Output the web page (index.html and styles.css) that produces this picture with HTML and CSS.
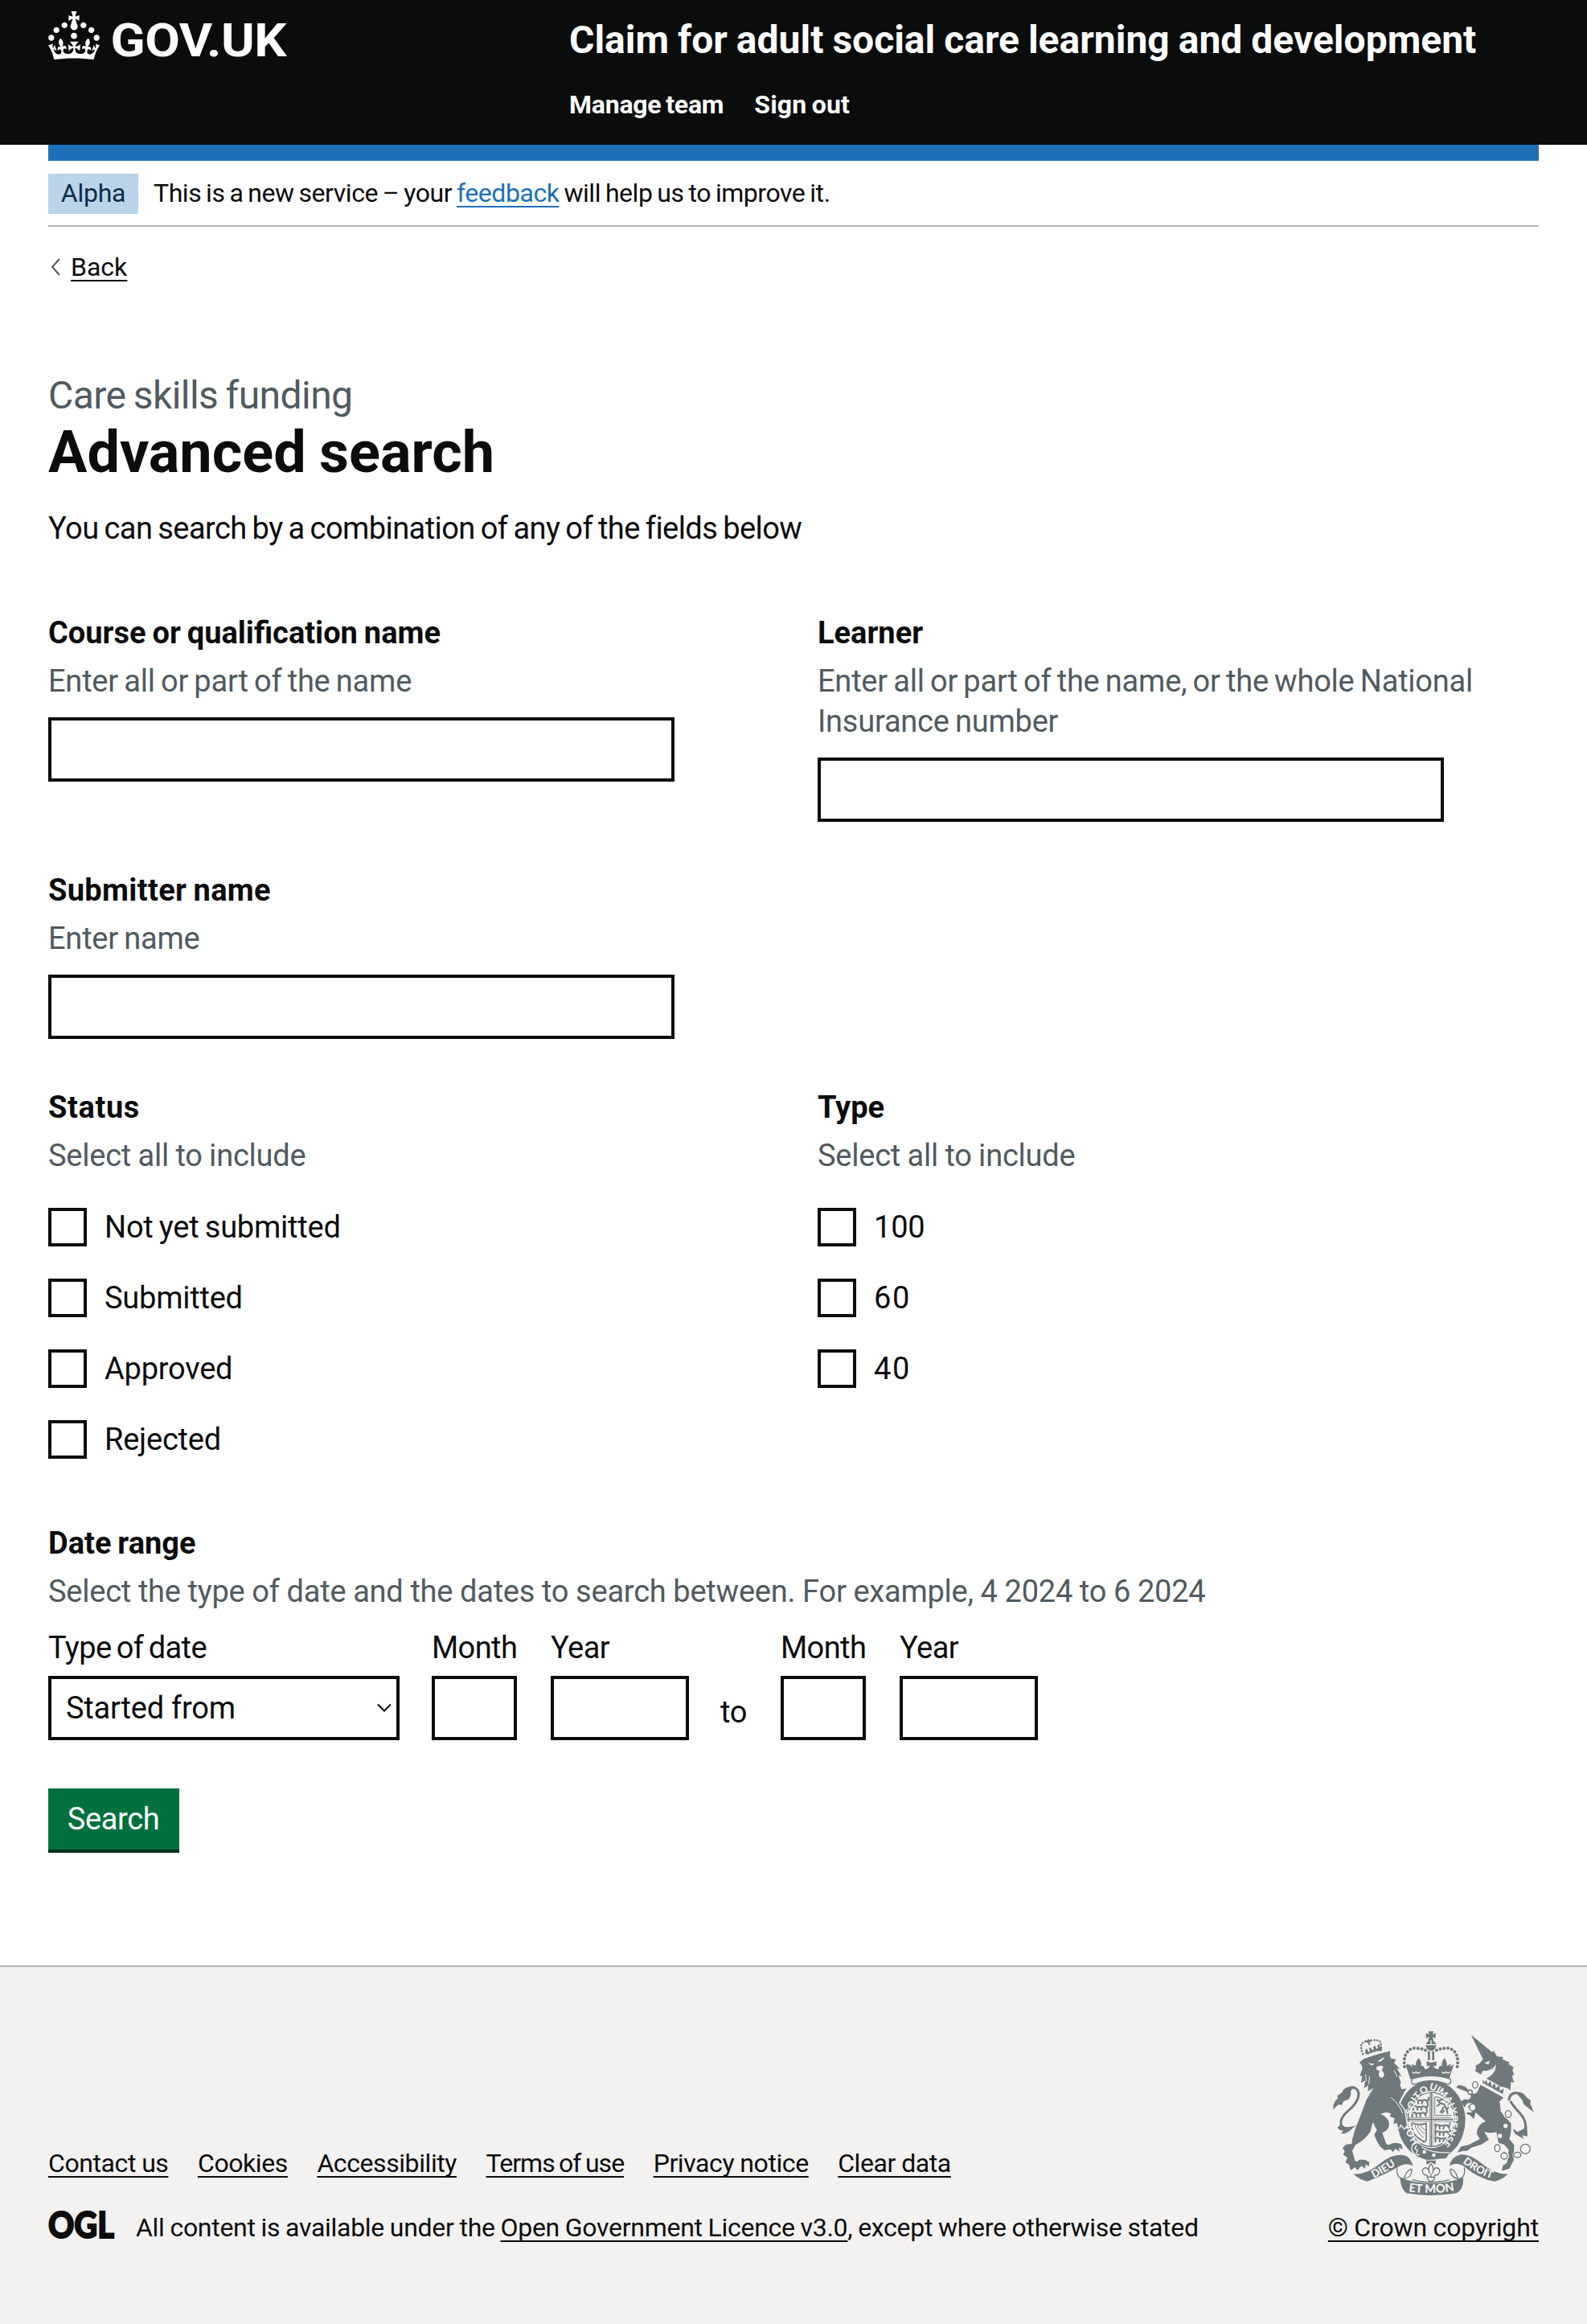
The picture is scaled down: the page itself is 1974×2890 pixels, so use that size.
FILE: index.html
```html
<!DOCTYPE html>
<html lang="en">
<head>
<meta charset="utf-8">
<title>Advanced search</title>
<link rel="stylesheet" href="styles.css">
</head>
<body>
<header class="header">
  <div class="container header-row">
    <a class="logo" href="#" aria-label="GOV.UK">
      <svg width="300" height="60" viewBox="0 0 150 30">
        <path fill="#fff" d="M22.6 10.4c-1 .4-2-.1-2.4-1-.4-.9.1-2 1-2.4.9-.4 2 .1 2.4 1s-.1 2-1 2.4m4.9 3c-1 .4-2-.1-2.4-1-.4-.9.1-2 1-2.4.9-.4 2 .1 2.4 1s0 2-1 2.4m3.3 4.8c-1 .4-2-.1-2.4-1-.4-.9.1-2 1-2.4.9-.4 2 .1 2.4 1s-.1 2-1 2.4M17 4.7l2.3 1.2V2.5l-2.3.7-.2-.2.9-3h-3.4l.9 3-.2.2c-.1.1-2.3-.7-2.3-.7v3.4L15 4.7c.1.1.1.2.2.2l-1.3 4c-.1.2-.1.4-.1.6 0 1.1.8 2 1.9 2.2h.7c1-.2 1.9-1.1 1.9-2.1 0-.2 0-.4-.1-.6l-1.3-4c-.1-.2 0-.2.1-.3m-7.6 5.7c.9.4 2-.1 2.4-1 .4-.9-.1-2-1-2.4-.9-.4-2 .1-2.4 1s0 2 1 2.4m-5 3c.9.4 2-.1 2.4-1 .4-.9-.1-2-1-2.4-.9-.4-2 .1-2.4 1s.1 2 1 2.4m-3.2 4.8c.9.4 2-.1 2.4-1 .4-.9-.1-2-1-2.4-.9-.4-2 .1-2.4 1s0 2 1 2.4m14.8 11c4.4 0 8.6.3 12.3.8 1.1-4.5 2.4-7 3.7-8.8l-2.5-.9c.2 1.3.3 1.9 0 2.7-.4-.4-.8-1.1-1.1-2.3l-1.2 4c.7-.5 1.3-.8 2-.9-1.1 2.5-2.6 3.1-3.5 3-1.1-.2-1.7-1.2-1.5-2.1.3-1.2 1.5-1.5 2.1-.1 1.1-2.3-.8-3-2-2.3 1.9-1.9 2.1-3.5.6-5.6-2.1 1.6-2.1 3.2-1.2 5.5-1.2-1.4-3.2-.6-2.5 1.6.9-1.4 2.1-.5 1.9.8-.2 1.1-1.7 2.1-3.5 1.9-2.7-.2-2.9-2.1-2.9-3.6.7-.1 1.9.5 2.9 1.9l.4-4.3c-1.1 1.1-2.1 1.4-3.2 1.4.4-1.2 2.1-3 2.1-3h-5.4s1.7 1.9 2.1 3c-1.1 0-2.1-.2-3.2-1.4l.4 4.3c1-1.4 2.2-2 2.9-1.9-.1 1.5-.2 3.4-2.9 3.6-1.9.2-3.4-.8-3.5-1.9-.2-1.3 1-2.2 1.9-.8.7-2.3-1.2-3-2.5-1.6.9-2.2.9-3.9-1.2-5.5-1.5 2-1.3 3.7.6 5.6-1.2-.7-3.1 0-2 2.3.6-1.4 1.8-1.1 2.1.1.2.9-.3 1.9-1.5 2.1-.9.2-2.4-.5-3.5-3 .6 0 1.2.3 2 .9l-1.2-4c-.3 1.1-.7 1.9-1.1 2.3-.3-.8-.2-1.4 0-2.7l-2.9.9C1.3 23 2.6 25.5 3.7 30c3.7-.5 7.9-.8 12.3-.8"/>
        <circle cx="16" cy="15.3" r="1.9" fill="#fff"/>
        <text class="logo-text" x="38.8" y="28" textLength="109.2" lengthAdjust="spacingAndGlyphs">GOV.UK</text>
      </svg>
    </a>
    <div class="header-content">
      <a class="service-name" href="#">Claim for adult social care learning and development</a>
      <nav class="header-nav">
        <a href="#">Manage team</a>
        <a class="sign-out" href="#">Sign out</a>
      </nav>
    </div>
  </div>
</header>

<div class="container">
  <div class="phase-banner">
    <strong class="tag">Alpha</strong>
    <p class="phase-text">This is a new service – your <a class="link" href="#">feedback</a> will help us to improve it.</p>
  </div>
  <a class="back-link" href="#">
    <svg width="14" height="24" viewBox="0 0 14 24"><path d="M12 2 3 12l9 10" fill="none" stroke="#505a5f" stroke-width="2"/></svg>
    <span class="underlined">Back</span>
  </a>

  <main>
    <span class="caption">Care skills funding</span>
    <h1 class="title">Advanced search</h1>
    <p class="intro">You can search by a combination of any of the fields below</p>

    <form class="form">
      <div class="row">
        <div class="field">
          <label class="label" for="course">Course or qualification name</label>
          <div class="hint">Enter all or part of the name</div>
          <input class="input" id="course" type="text">
        </div>
        <div class="field">
          <label class="label" for="learner">Learner</label>
          <div class="hint">Enter all or part of the name, or the whole National<br>Insurance number</div>
          <input class="input" id="learner" type="text">
        </div>
      </div>
      <div class="row">
        <div class="field">
          <label class="label label-wide" for="submitter">Submitter name</label>
          <div class="hint">Enter name</div>
          <input class="input" id="submitter" type="text">
        </div>
      </div>
      <div class="row row-checks">
        <fieldset class="field">
          <legend class="label label-wider">Status</legend>
          <div class="hint hint-select">Select all to include</div>
          <div class="checks">
            <label class="check"><input type="checkbox">Not yet submitted</label>
            <label class="check"><input type="checkbox">Submitted</label>
            <label class="check"><input type="checkbox">Approved</label>
            <label class="check"><input type="checkbox">Rejected</label>
          </div>
        </fieldset>
        <fieldset class="field">
          <legend class="label">Type</legend>
          <div class="hint hint-select">Select all to include</div>
          <div class="checks">
            <label class="check"><input type="checkbox">100</label>
            <label class="check check-wide"><input type="checkbox">60</label>
            <label class="check check-wide"><input type="checkbox">40</label>
          </div>
        </fieldset>
      </div>

      <fieldset class="dates">
        <legend class="label">Date range</legend>
        <div class="hint hint-dates">Select the type of date and the dates to search between. For example, 4 2024 to 6 2024</div>
        <div class="date-row">
          <label class="date-item type">Type of date
            <span class="select-wrap">
              <select class="select"><option>Started from</option></select>
              <svg class="select-arrow" width="20" height="14" viewBox="0 0 20 14"><path d="M2 2.500l8 8 8-8" fill="none" stroke="#0b0c0c" stroke-width="2"/></svg>
            </span>
          </label>
          <label class="date-item month">Month<input class="input" type="text"></label>
          <label class="date-item year">Year<input class="input" type="text"></label>
          <span class="to">to</span>
          <label class="date-item month">Month<input class="input" type="text"></label>
          <label class="date-item year">Year<input class="input" type="text"></label>
        </div>
      </fieldset>

      <button class="button" type="button">Search</button>
    </form>
  </main>
</div>

<footer class="footer">
  <div class="container footer-row">
    <div class="footer-meta">
      <nav class="footer-links">
        <a href="#">Contact us</a>
        <a href="#">Cookies</a>
        <a href="#">Accessibility</a>
        <a class="terms" href="#">Terms of use</a>
        <a href="#">Privacy notice</a>
        <a href="#">Clear data</a>
      </nav>
      <div class="licence">
        <svg class="ogl" width="82" height="36" viewBox="0 0 82 36"><text class="ogl-text" x="0" y="33.500" textLength="82" lengthAdjust="spacingAndGlyphs">OGL</text></svg>
        <span>All content is available under the <a href="#">Open Government Licence v3.0</a>, except where otherwise stated</span>
      </div>
    </div>
    <div class="copyright">
      <svg class="arms" width="250" height="204" viewBox="174 138 750 612">
        <defs>
          <path id="garter" d="M541 581A99 116 0 0 1 541 357A99 116 0 0 1 541 581"/>
          <path id="dieu" d="M318 690Q372 664 416 632"/>
          <path id="mon" d="M454 735Q540 748 630 733"/>
          <path id="droit" d="M652 624Q706 668 772 690"/>
          <g id="passant">
            <path d="M0 10q8-12 16-5q12 3 24-1q10 0 16 6M6 10l-4 10M18 8l2 12M36 8l-4 12M50 8l6 10M4 4l-3-6M54 8q8-8 2-14" fill="none" stroke-width="6"/>
          </g>
        </defs>
        <g class="grey">
          <!-- royal crown -->
          <path d="M530 138h20l-5 12 12-6v20l-12-5 5 14h-22l5-14-12 5v-20l12 6z"/>
          <circle cx="540" cy="191" r="19"/>
          <path d="M528 212h8v34h-8zM544 212h8v34h-8z"/>
          <path class="line beads" d="M441 270C434 222 458 198 486 201Q506 202 524 211"/>
          <path class="line beads" d="M638 270C646 222 622 198 594 201Q574 202 556 211"/>
          <path d="M458 262l16 10-8-12 18 6q-4-12 10-28q14 16 8 30q14-4 12 8q8 6 14 0 6-4 8-10l-12 2v-18l14 4h8l14-4v18l-12-2q2 6 8 10 8 6 14 0-4-12 12-8q-6-14 8-30q12 16 8 28l18-6-8 12 16-10q-4 20-10 32l-6 22q-72-20-146 0l-6-22q-6-12-10-32"/>
        </g>
        <path class="paper-line" stroke-width="4" d="M520 188h40M540 172v14M470 289q6 10 14 0 8 10 16 0M580 289q8 10 16 0 8 10 14 0"/>
        <!-- garter -->
        <ellipse class="grey" cx="541" cy="469" rx="127" ry="148"/>
        <path d="M468 316Q540 292 612 316L614 328Q608 340 596 333 540 312 484 333 472 340 467 328z" fill="#f3f2f1" stroke="#6f787b" stroke-width="4"/>
        <ellipse class="paper" cx="541" cy="467" rx="92" ry="107"/>
        <ellipse class="grey-line" cx="541" cy="467" rx="87" ry="101" stroke-width="4"/>
        <path class="grey-line" stroke-width="5" d="M541 366v204M452 467h178"/>
        <path class="grey-line" stroke-width="2" d="M535 372v88h-80M547 372v88h78M535 474h-80M547 474h80M535 474v90M547 474v90"/>
        <g class="grey-line">
          <use href="#passant" x="473" y="390"/><use href="#passant" x="470" y="414"/><use href="#passant" x="466" y="438"/>
          <use href="#passant" x="553" y="484"/><use href="#passant" x="553" y="508"/><use href="#passant" x="553" y="532"/>
          <path stroke-width="3" d="M554 384v68h62M554 382q40 4 56 40"/>
          <path stroke-width="6" d="M562 392l12 14 14 4 10 18 4 18M574 408l-12 10M588 420l-14 22M596 432l14-14M570 396l14-4M580 444l10-12M598 400q12 8 6 20"/>
          <path stroke-width="5" d="M468 480q24 10 54 2v60q-4 12-14 6M468 480q-2 50 46 68"/>
          <path stroke-width="3" d="M480 488q2 18 32 48M490 488q2 16 26 32M500 488q2 10 18 18"/>
        </g>
        <path class="grey" d="M484 560Q500 578 540 580L566 580 580 562 628 560 596 612 520 617 468 592z"/>
        <path class="paper-line" stroke-width="4" d="M500 556q-30-10-32 20q2 26 30 22M486 562l-6 14 10 6-6 12M505 570q40 24 104 20"/>
        <circle class="paper" cx="515" cy="588" r="7"/><circle class="paper" cx="550" cy="600" r="7"/>
        <g class="motto ring">
          <text><textPath href="#garter" startOffset="17%">HON</textPath></text>
          <text><textPath href="#garter" startOffset="35.500%">SOIT</textPath></text>
          <text><textPath href="#garter" startOffset="49%">QUI</textPath></text>
          <text><textPath href="#garter" startOffset="61%">MAL</textPath></text>
          <text><textPath href="#garter" startOffset="69.500%">Y</textPath></text>
          <text><textPath href="#garter" startOffset="82%">PENSE</textPath></text>
        </g>
        <!-- lion -->
        <path class="lion-edge" d="M430 384L420 404 440 432 450 490 440 500 426 484 420 500"/>
        <g class="grey">
          <path class="line beads small" d="M286 222Q270 188 290 178 305 172 322 172 345 168 352 180 356 196 350 212"/>
          <path d="M304 167h6l-1 5 6-2v9l-5-1 3 12h-5l-4-11-5 2-2-9 6 1z"/>
          <path d="M286 212l10 10-2-12 6-8 8 14 4-4-4-10 6-4 8 12 4-4-2-10 8-4 4 12 6-4-2-10 8-4 2 14 8-2-2 12q-32 2-54 16z"/>
          <path d="M290 240Q340 220 388 212L386 232 392 240 410 242 402 256 424 278 412 276 430 306 418 302 428 330 424 336 430 354 448 352 430 384 420 404 440 432 450 490 440 500 426 484 420 500 412 480 400 484 404 462 386 456 390 444 372 440 352 446Q384 460 384 486 380 510 358 516L372 556Q380 566 390 558 410 550 430 560L434 578 420 572 422 588 408 576 398 588 388 578 366 582 350 568 338 548 328 524 338 506 322 478 314 512Q296 540 258 562L246 584 256 620Q262 628 272 618 290 612 310 626L308 642 296 634 294 650 280 640 266 656 256 646 240 656 234 636 220 626 228 610 212 598 218 586 210 574 222 560 244 558Q248 520 270 470 290 420 302 384L322 350 304 362 306 340 290 350 294 322 278 330 284 304 274 306 284 276 282 266 273 254z"/>
          <path class="line tail" d="M246 498Q200 508 204 474 206 454 236 430 268 402 270 374 268 344 240 349"/>
          <path d="M254 343Q214 344 208 366L188 380 194 386Q174 400 174 430L196 410 206 414 214 398 232 392Q244 376 240 362z"/>
          <path d="M202 484Q196 498 190 494 194 508 212 508 206 520 204 520 228 522 244 502L262 488 242 494 220 496z"/>
        </g>
        <path class="paper" d="M306 254q14 8 22 2l-4 8q-12 2-18-10M342 248q8-4 24-14-2 12-20 18zM336 272q14-10 26-2l-6 14q12 8 8 22-10 10-18 0-4-12 4-18l-14-8z"/>
        <path class="paper-line" stroke-width="3" d="M284 240Q332 224 384 210M390 384Q420 408 434 444M326 482Q332 506 324 528M296 300l2 26M310 306l-2 30M402 284l12 24M300 390q10-20 24-38"/>
        <!-- unicorn -->
        <g class="grey">
          <path d="M690 153L698 158 768 216 774 211 786 232 810 234 806 242 834 254 828 260 848 272 844 284 850 300 842 304 850 330 838 326 836 360 826 350 800 344 776 330 746 314Q766 306 778 286 784 268 782 262 768 286 748 292 734 290 728 300 720 296 704 286 712 272 704 268 724 258 734 242 756 232z"/>
          <path d="M726 336L812 384 796 400 800 436Q812 456 838 480 842 510 832 540L850 562 848 620 832 650 814 656 804 658 808 640 824 628 830 580 812 560 792 554 784 514Q760 520 738 512L756 542 728 560 690 572 674 584 660 584 638 590 652 568 680 562 722 540 710 520Q712 484 744 474L706 440 700 466 684 450 672 446 678 436 692 438 688 424 664 420 652 400 664 392 682 392 690 380 674 364 640 350 634 346 644 338 668 344 678 356 700 372 712 366z"/>
          <path class="line tail" d="M830 396Q834 366 860 368 884 368 882 384M836 398Q846 416 872 444 898 474 892 500 884 516 872 524"/>
          <path d="M856 366Q884 362 896 384L912 396 910 408 924 440 898 420 886 410 880 394zM898 492Q884 506 862 514 850 504 846 500 848 518 862 526L886 540 880 526 900 530z"/>
        </g>
        <path class="paper" d="M738 256l22-8-6 14zM734 284q24 6 38-14l-16 26-14 10-16-8z"/>
        <path class="paper" d="M736 310l84 50-8 26-86-48z"/>
        <path class="grey" d="M734 318l6 12 6-12 6 18 8-12 4 6 2 16 10-14 4 6 2 14 10-12 4 6v14l16-8-4 20-76-42z"/>
        <path class="chain-edge" d="M700 326a10 12 0 1 0 1 0M684 410a12 13 0 1 0 1 0M828 434a13 13 0 1 0 1 0M813 590a13 13 0 1 0 1 0M862 588a13 11 0 1 0 1 0"/>
        <g class="chain">
          <ellipse cx="705" cy="338" rx="10" ry="12"/><circle cx="686" cy="365" r="8" fill="#f3f2f1"/><ellipse cx="695" cy="422" rx="12" ry="13" fill="#f3f2f1"/>
          <ellipse cx="828" cy="447" rx="11" ry="13"/><ellipse cx="787" cy="574" rx="10" ry="13"/><circle cx="813" cy="603" r="12"/><ellipse cx="862" cy="599" rx="13" ry="10"/><circle cx="892" cy="577" r="18"/>
        </g>
        <circle class="paper" cx="818" cy="491" r="8"/><circle class="paper" cx="797" cy="528" r="8"/>
        <!-- scroll -->
        <g class="grey">
          <path d="M250 670Q300 674 352 630 396 594 436 600 464 604 472 640 450 628 424 640 372 672 302 698 276 694 250 670"/>
          <path d="M828 670Q780 674 728 630 684 594 650 598 618 604 608 640 630 626 658 638 720 690 778 698 806 692 828 670"/>
          <path d="M424 684Q540 728 660 684 664 726 636 742 540 758 448 742 428 728 424 684"/>
          <path d="M522 620h36l-2 16-16-10-16 10z"/>
        </g>
        <path class="grey-line" stroke-width="4" d="M414 646Q408 684 436 688 464 688 468 660 472 646 456 658 444 668 440 688M664 646Q670 684 644 688 618 688 612 660 608 646 624 658 636 668 640 688M470 692Q540 712 610 692"/>
        <path class="grey-line" stroke-width="4" d="M540 632q14 14 5 36q6-28 22-18q12 8-2 24q-10-2-12 4v6q0 12-13 14q-13-2-13-14v-6q-2-6-12-4q-14-16-2-24q16-10 22 18q-9-22 5-36M524 682h32M540 668v16"/>
        <g class="motto">
          <text><textPath href="#dieu" startOffset="50%">DIEU</textPath></text>
          <text class="mon"><textPath href="#mon" startOffset="50%">ET MON</textPath></text>
          <text><textPath href="#droit" startOffset="50%">DROIT</textPath></text>
        </g>
      </svg>
      <a href="#">© Crown copyright</a>
    </div>
  </div>
</footer>
</body>
</html>
```
FILE: styles.css
```css
* { box-sizing: border-box; }
body { margin: 0; background: #fff; color: #0b0c0c; font: 400 38px/50px Roboto, Arial, sans-serif; letter-spacing: -.006em; word-spacing: -.05em; }
h1, p, fieldset, legend { margin: 0; padding: 0; border: 0; }
fieldset { min-width: 0; }
legend { display: block; }
.container { margin: 0 60px; }
a { color: inherit; text-decoration: none; }

.header { height: 180px; background: #0b0c0c; color: #fff; }
.header-row { display: grid; grid-template-columns: 648px 1fr; }
.logo { padding-top: 14px; line-height: 0; }
.logo svg { overflow: visible; }
.logo-text { font: 700 29px Roboto, Arial, sans-serif; fill: #fff; }
.header-content { padding-top: 20px; }
.service-name { display: block; font-size: 48px; line-height: 60px; font-weight: 700; letter-spacing: 0; word-spacing: -.02em; }
.header-nav { display: flex; gap: 38px; margin-top: 30px; font-size: 32px; line-height: 40px; font-weight: 700; }
.sign-out { letter-spacing: .006em; }

.phase-banner { display: flex; gap: 20px; border-top: 20px solid #1d70b8; border-bottom: 2px solid #b1b4b6; padding: 16px 0 14px; font-size: 32px; line-height: 40px; }
.tag { width: 112px; height: 50px; padding-top: 4px; text-align: center; background: #bbd4ea; color: #0c2d4a; font-weight: 400; }
.phase-text { padding-top: 4px; margin-left: -1px; letter-spacing: -.014em; word-spacing: -.05em; }
.link { color: #1d70b8; text-decoration: underline; text-decoration-thickness: 2px; text-underline-offset: 5px; text-decoration-skip-ink: none; }
.back-link { display: flex; align-items: center; gap: 12px; width: max-content; margin: 30px 0 0 2px; font-size: 32px; line-height: 40px; letter-spacing: 0; }
.underlined, .footer a { text-decoration: underline; text-decoration-thickness: 2px; text-underline-offset: 5px; text-decoration-skip-ink: none; }

.caption { display: block; margin-top: 110px; font-size: 48px; line-height: 60px; color: #505a5f; letter-spacing: -.012em; }
.title { padding-top: 1px; font-size: 72px; line-height: 80px; font-weight: 700; letter-spacing: 0; word-spacing: -.02em; }
.intro { margin: 29px 0 80px; letter-spacing: -.015em; word-spacing: -.05em; }

.row { display: grid; grid-template-columns: 897px 897px; gap: 60px; margin-bottom: 60px; }
.label { display: block; margin-bottom: 10px; font-weight: 700; letter-spacing: 0; word-spacing: -.04em; }
.label-wide { letter-spacing: .009em; }
.label-wider { letter-spacing: .016em; }
.hint { color: #505a5f; }
.hint-select { word-spacing: -.02em; }
.hint-dates { word-spacing: -.01em; }
.input { display: block; width: 779px; height: 80px; margin: 20px 0 0; padding: 0 10px; border: 4px solid #0b0c0c; border-radius: 0; background: #fff; }
.checks { display: grid; gap: 38px; margin-top: 39px; }
.check { display: flex; align-items: center; gap: 22px; }
.check-wide { letter-spacing: .04em; }
.check input { appearance: none; width: 48px; height: 48px; margin: 0; border: 4px solid #0b0c0c; background: #fff; }
.row-checks { margin-bottom: 79px; }

.dates { display: block; }
.date-row { display: flex; margin-top: 20px; }
.date-item { display: flex; flex-direction: column; letter-spacing: -.015em; }
.date-item .input { width: 100%; margin-top: 10px; }
.type { width: 437px; margin-right: 40px; word-spacing: -.07em; }
.month { width: 106px; margin-right: 42px; }
.year { width: 172px; }
.to { width: 114px; padding: 80px 0 0 39px; }
.select-wrap { display: grid; margin-top: 10px; letter-spacing: -.006em; }
.select { grid-area: 1 / 1; width: 100%; height: 80px; margin: 0; padding: 0 18px; border: 4px solid #0b0c0c; border-radius: 0; appearance: none; background: #fff; color: #0b0c0c; font: inherit; letter-spacing: inherit; }
.select-arrow { grid-area: 1 / 1; justify-self: end; align-self: center; margin-right: 9px; }
.button { display: block; width: 163px; height: 76px; margin: 60px 0 0; padding: 0 1px 0 0; border: 0; border-radius: 0; background: #00703c; box-shadow: 0 4px 0 #002d18; color: #fff; font: inherit; letter-spacing: -.01em; }

.footer { height: 446px; margin-top: 144px; border-top: 2px solid #b1b4b6; background: #f3f2f1; font-size: 32px; line-height: 40px; }
.footer-row { display: flex; justify-content: space-between; align-items: flex-end; padding-top: 80px; }
.footer-links { display: flex; gap: 36.5px; margin-bottom: 40px; letter-spacing: -.013em; word-spacing: -.01em; }
.terms { letter-spacing: -.03em; word-spacing: -.05em; }
.licence { display: flex; gap: 27px; letter-spacing: -.009em; word-spacing: -.025em; }
.ogl { margin-top: -1px; overflow: visible; }
.ogl-text { font: 900 46px Lato, Arial, sans-serif; letter-spacing: 0; fill: #0b0c0c; stroke: #0b0c0c; stroke-width: 2; }
.copyright { display: flex; flex-direction: column; align-items: center; gap: 20px; letter-spacing: -.004em; word-spacing: -.01em; }
.arms { display: block; }
.grey { fill: #6f787b; }
.paper { fill: #f3f2f1; }
.line, .grey-line, .paper-line, .chain, .lion-edge, .chain-edge { fill: none; stroke: #6f787b; }
.paper-line { stroke: #f3f2f1; }
.lion-edge { stroke: #f3f2f1; stroke-width: 8; }
.chain-edge { stroke: #f3f2f1; stroke-width: 10; }
.beads { stroke-width: 12; stroke-linecap: round; stroke-dasharray: 0 14.5; }
.small { stroke-width: 8; stroke-dasharray: 0 11; }
.tail { stroke-width: 9; }
.chain { stroke-width: 4; }
.motto { font: 900 40px Lato, Arial, sans-serif; fill: #f3f2f1; text-anchor: middle; letter-spacing: 0; word-spacing: 0; }
.ring { font-size: 36px; }
.mon { font-size: 44px; }
```
